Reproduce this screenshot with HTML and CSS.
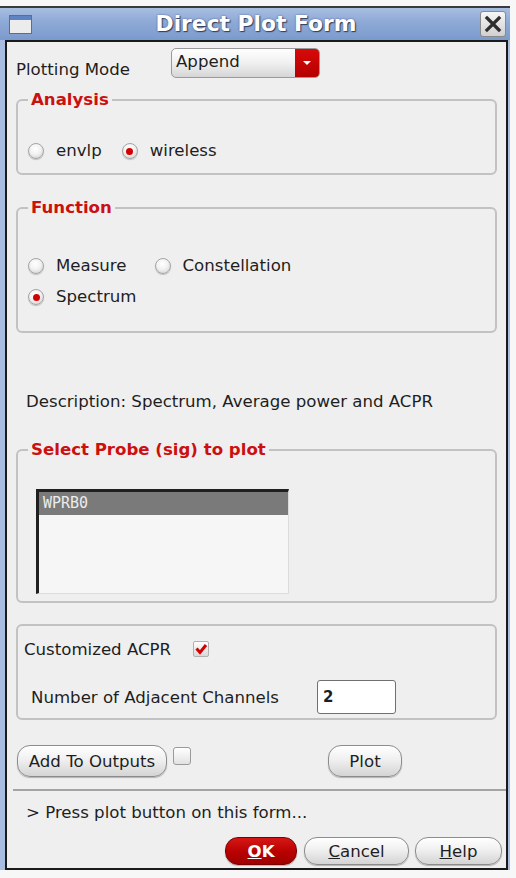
FILE: index.html
```html
<!DOCTYPE html>
<html>
<head>
<meta charset="utf-8">
<link rel="stylesheet" href="styles.css">
</head>
<body>
<div class="frame">
  <div class="titlebar">
    <div class="winicon"><div class="winicon-top"></div></div>
    <div class="title">Direct Plot Form</div>
    <div class="close">
      <svg width="24" height="24" viewBox="0 0 24 24"><path d="M6 6 L18 18 M18 6 L6 18" stroke="#2d2d2d" stroke-width="3.2" stroke-linecap="square" fill="none"/></svg>
    </div>
  </div>
  <div class="body">
    <div class="plotrow">
      <div class="plotlabel">Plotting Mode</div>
      <div class="dropdown">
        <div class="dd-text">Append</div>
        <div class="dd-btn"><svg width="10" height="6" viewBox="0 0 10 6"><path d="M1 1 L9 1 L5 5 Z" fill="#fff"/></svg></div>
      </div>
    </div>

    <fieldset class="group g-analysis">
      <legend>Analysis</legend>
      <div class="gbody">
        <div class="radiorow">
          <div class="opt"><span class="radio"></span><span>envlp</span></div>
          <div class="opt"><span class="radio on"></span><span>wireless</span></div>
        </div>
      </div>
    </fieldset>

    <fieldset class="group g-function">
      <legend>Function</legend>
      <div class="gbody">
        <div class="radiorow">
          <div class="opt"><span class="radio"></span><span>Measure</span></div>
          <div class="opt"><span class="radio"></span><span>Constellation</span></div>
        </div>
        <div class="radiorow row2">
          <div class="opt"><span class="radio on"></span><span>Spectrum</span></div>
        </div>
      </div>
    </fieldset>

    <div class="desc">Description: Spectrum, Average power and ACPR</div>

    <fieldset class="group g-probe">
      <legend>Select Probe (sig) to plot</legend>
      <div class="gbody">
        <div class="listbox">
          <div class="listitem sel">WPRB0</div>
        </div>
      </div>
    </fieldset>

    <div class="acpr">
      <div class="acpr-row1">
        <span>Customized ACPR</span>
        <span class="check"><svg width="14" height="14" viewBox="0 0 14 14"><path d="M2.5 6.5 L6 10.5 L12 3" stroke="#d40000" stroke-width="3" fill="none"/></svg></span>
      </div>
      <div class="acpr-row2">
        <span class="adjlabel">Number of Adjacent Channels</span>
        <div class="numinput">2</div>
      </div>
    </div>

    <div class="btnrow">
      <div class="btn btn-add">Add To Outputs</div>
      <span class="smallcheck"></span>
      <div class="btn btn-plot">Plot</div>
    </div>

    <div class="sep"></div>

    <div class="status">&gt; Press plot button on this form...</div>

    <div class="footer">
      <div class="btn btn-ok"><u>O</u>K</div>
      <div class="btn btn-cancel"><u>C</u>ancel</div>
      <div class="btn btn-help"><u>H</u>elp</div>
    </div>
  </div>
</div>
</body>
</html>
```
FILE: styles.css
```css
* { box-sizing: border-box; }
html, body { margin: 0; padding: 0; }
body {
  width: 516px;
  height: 878px;
  overflow: hidden;
  background: #f7f7f7;
  font-family: "DejaVu Sans", sans-serif;
  font-size: 16.6px;
  color: #1e1e1e;
}
.frame {
  margin-top: 6px;
  width: 510px;
  background: #a9bde0;
  border-top: 2px solid #3a3a3a;
}
.titlebar {
  height: 32px;
  display: flex;
  align-items: center;
  padding: 0 4px 0 9px;
  background: linear-gradient(#a8bee2, #8ea9d6 45%, #7b9acd);
}
.winicon {
  width: 23px;
  height: 19px;
  border: 1px solid #5a6e92;
  background: #ececec;
  margin-top: 1px;
}
.winicon-top {
  height: 4px;
  background: #5f82c2;
}
.title {
  flex: 1;
  text-align: center;
  font-weight: bold;
  font-size: 21.8px;
  color: #ffffff;
  text-shadow: 1px 1px 1px #2e3e5e, 0 0 2px #4a5f88;
  line-height: 32px;
}
.close {
  width: 26px;
  height: 26px;
  border: 1px solid #8a8a8a;
  border-radius: 3px;
  background: linear-gradient(#f6f6f6, #d0d0d0);
  display: flex;
  align-items: center;
  justify-content: center;
}
.body {
  margin: 0 2px 0 5px;
  width: 503px;
  border: 2px solid #1a1a1a;
  background: #efefef;
  padding-bottom: 3px;
}
.plotrow {
  display: flex;
  align-items: flex-start;
  padding: 6px 0 0 9px;
}
.plotlabel {
  width: 155px;
  margin-top: 12px;
  line-height: 20px;
}
.dropdown {
  width: 149px;
  height: 30px;
  display: flex;
  border: 1px solid #9a9a9a;
  border-radius: 5px;
  overflow: hidden;
  background: linear-gradient(#ffffff, #f0f0f0 50%, #d6d6d6);
}
.dd-text {
  flex: 1;
  padding-left: 4px;
  line-height: 26px;
}
.dd-btn {
  width: 24px;
  background: linear-gradient(#d80a0a, #b40000);
  display: flex;
  align-items: center;
  justify-content: center;
}
.group {
  margin: 0 9px;
  padding: 0;
  border: 2px solid #c2c2c2;
  border-radius: 6px;
  min-width: 0;
}
.group legend {
  margin-left: 10px;
  padding: 0 3px;
  font-weight: bold;
  color: #cc1010;
  line-height: 20px;
}
.g-analysis { margin-top: 10px; }
.g-analysis .gbody { padding: 31px 0 12px 10px; }
.g-function { margin-top: 23px; }
.g-function .gbody { padding: 38px 0 24px 10px; }
.g-probe { margin-top: 28px; }
.g-probe .gbody { padding: 29px 0 7px 18px; }
.radiorow {
  display: flex;
  align-items: center;
  gap: 20px;
  height: 20px;
}
.g-function .radiorow { gap: 28px; }
.radiorow.row2 { margin-top: 11px; }
.opt {
  display: flex;
  align-items: center;
  gap: 12px;
  line-height: 20px;
}
.radio {
  width: 16px;
  height: 16px;
  border-radius: 50%;
  border: 1px solid #a5a5a5;
  background: radial-gradient(circle at 45% 35%, #ffffff 0%, #f2f2f2 45%, #c9c9c9 100%);
  box-shadow: 0 1px 1px rgba(0,0,0,0.2);
  display: flex;
  align-items: center;
  justify-content: center;
}
.radio.on::after {
  content: "";
  width: 7px;
  height: 7px;
  border-radius: 50%;
  background: #d40000;
}
.desc {
  margin-top: 59px;
  padding-left: 19px;
  line-height: 20px;
}
.listbox {
  width: 253px;
  height: 105px;
  background: #f6f6f6;
  border-top: 3px solid #1f1f1f;
  border-left: 3px solid #1f1f1f;
  border-right: 1px solid #dcdcdc;
  border-bottom: 1px solid #dcdcdc;
}
.listitem {
  height: 23px;
  line-height: 23px;
  padding-left: 4px;
  font-family: "DejaVu Sans Mono", monospace;
  font-size: 15px;
}
.listitem.sel {
  background: #7a7a7a;
  color: #ececec;
}
.acpr {
  margin: 21px 9px 0 9px;
  border: 2px solid #c2c2c2;
  border-radius: 6px;
  padding: 13px 0 4px 6px;
}
.acpr-row1 {
  display: flex;
  align-items: center;
  gap: 22px;
  height: 20px;
}
.check {
  width: 16px;
  height: 16px;
  border: 1px solid #b0b0b0;
  border-radius: 2px;
  background: linear-gradient(#ffffff, #d8d8d8);
  display: flex;
  align-items: center;
  justify-content: center;
}
.acpr-row2 {
  display: flex;
  align-items: center;
  margin-top: 21px;
  padding-left: 7px;
}
.adjlabel {
  width: 286px;
}
.numinput {
  width: 79px;
  height: 34px;
  background: #ffffff;
  border: 1px solid #707070;
  border-radius: 3px;
  padding-left: 5px;
  line-height: 32px;
  font-weight: bold;
  font-size: 15px;
}
.btnrow {
  display: flex;
  align-items: flex-start;
  margin-top: 25px;
  padding-left: 10px;
}
.btn {
  height: 32px;
  border: 1px solid #8c8c8c;
  border-radius: 13px;
  background: linear-gradient(#ffffff, #f0f0f0 45%, #d4d4d4);
  box-shadow: 0 1px 1px rgba(0,0,0,0.25);
  display: flex;
  align-items: center;
  justify-content: center;
  color: #1e1e1e;
}
.btn-add { width: 150px; }
.smallcheck {
  width: 18px;
  height: 18px;
  margin: 2px 0 0 6px;
  border: 1px solid #9a9a9a;
  border-radius: 3px;
  background: linear-gradient(#ffffff, #e2e2e2);
}
.btn-plot { width: 74px; margin-left: 137px; }
.sep {
  margin: 12px 0 0 6px;
  height: 2px;
  background: #a4a4a4;
}
.status {
  margin-top: 12px;
  padding-left: 19px;
  line-height: 20px;
}
.footer {
  display: flex;
  justify-content: flex-end;
  margin-top: 14px;
  padding-right: 4px;
  gap: 6px;
}
.footer .btn { height: 28px; border-radius: 13px; }
.btn-ok {
  width: 72px;
  margin-right: 1px;
  background: linear-gradient(#d61616, #b80000 55%, #a00000);
  border-color: #7a0000;
  color: #ffffff;
  font-weight: bold;
}
.btn-cancel { width: 105px; }
.btn-help { width: 87px; }
```
